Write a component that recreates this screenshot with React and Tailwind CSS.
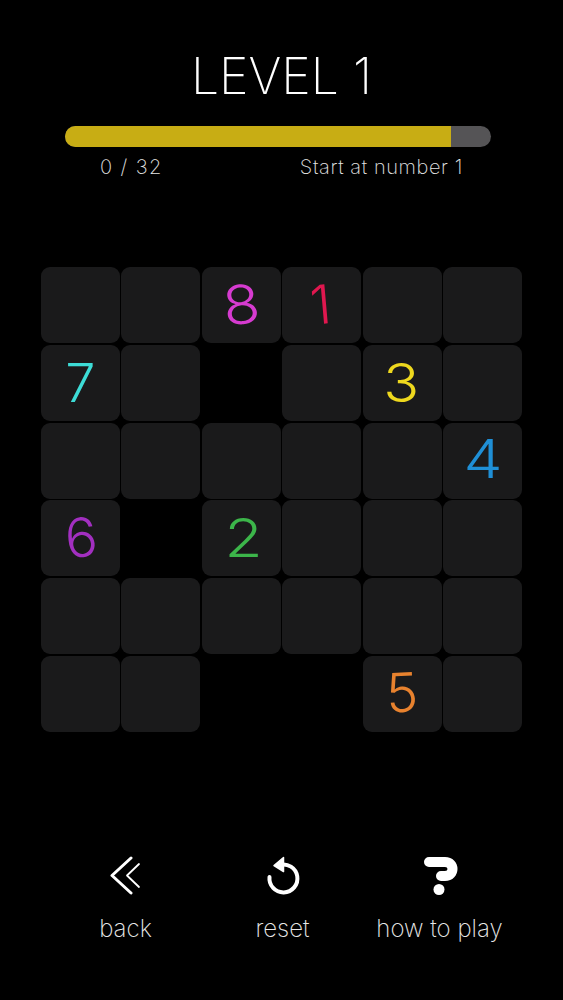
import React from 'react';

const font = { fontFamily: 'Inter, "Liberation Sans", sans-serif' };

// 6x6 board, null = hole, 0 = empty cell
const board = [
  [0, 0, 8, 1, 0, 0],
  [7, 0, null, 0, 3, 0],
  [0, 0, 0, 0, 0, 4],
  [6, null, 2, 0, 0, 0],
  [0, 0, 0, 0, 0, 0],
  [0, 0, null, null, 5, 0],
];

const digitClass = {
  1: 'text-[#e0174f] rotate-[-5deg] -translate-x-[1px]',
  2: 'text-[#3cb54a] scale-x-[1.15] translate-x-[2px]',
  3: 'text-[#eed81e] scale-x-[1.1] translate-x-[-1px]',
  4: 'text-[#1f8fd6] scale-x-[1.15] -translate-y-[2px]',
  5: 'text-[#e8822e] -rotate-3 -translate-y-[1px]',
  6: 'text-[#a22fc0] rotate-[-6deg] translate-x-[1px]',
  7: 'text-[#3ddcd6]',
  8: 'text-[#d63bd0] scale-x-[1.12] -rotate-6',
};

const BackIcon = () => (
  <svg width="36" height="40" viewBox="0 0 36 40" fill="none" stroke="white" strokeLinecap="round" strokeLinejoin="round">
    <path d="M23 2 L4 19.5 L23 37" strokeWidth="3" />
    <path d="M31 8 L19 19.5 L31 31" strokeWidth="1.8" />
  </svg>
);

const ResetIcon = () => (
  <svg width="36" height="40" viewBox="0 0 36 40" fill="none">
    <path d="M14.5 9 A14 14 0 1 1 4.5 21" stroke="white" strokeWidth="4" strokeLinecap="round" />
    <path d="M18.5 1.5 L9 9.5 L18.5 15.5 Z" fill="white" stroke="white" strokeWidth="1.5" strokeLinejoin="round" />
  </svg>
);

const HelpIcon = () => (
  <svg width="36" height="40" viewBox="0 0 36 40" fill="none">
    <path d="M7 6 H23 C33 6 33 20 23 20 H19" stroke="white" strokeWidth="10" strokeLinecap="round" strokeLinejoin="round" />
    <circle cx="17" cy="33.5" r="5.5" fill="white" />
  </svg>
);

const actions = [
  { label: 'back', icon: <BackIcon /> },
  { label: 'reset', icon: <ResetIcon /> },
  { label: 'how to play', icon: <HelpIcon /> },
];

export default function App() {
  return (
    <div className="h-[1000px] w-full bg-black overflow-hidden flex flex-col" style={font}>
      {/* Header */}
      <h1 className="mt-[47px] h-[58px] leading-[58px] text-center text-[50px] font-extralight text-white">
        LEVEL 1
      </h1>

      <div className="mt-[21px] mx-[65px] h-[21px] w-[426px] rounded-full bg-[#555456] overflow-hidden">
        <div className="h-full w-[386px] bg-[#c8ad14]"></div>
      </div>

      <div className="mt-[8px] mx-[100px] h-[24px] flex items-center justify-between text-[20px] font-extralight text-[#e4e4e4]">
        <span className="tracking-[1.4px]">0 / 32</span>
        <span className="tracking-[0.6px]">Start at number 1</span>
      </div>

      {/* Board */}
      <div className="mt-[88px] ml-[41px] w-[481px] grid grid-cols-6 gap-x-[1.5px] gap-y-[1.8px]">
        {board.flat().map((cell, i) =>
          cell === null ? (
            <div key={i} className="h-[76px]"></div>
          ) : (
            <div key={i} className="h-[76px] rounded-[9px] bg-[#1a1a1b] flex items-center justify-center">
              {cell > 0 && (
                <span className={`text-[54px] leading-none font-light ${digitClass[cell]}`}>{cell}</span>
              )}
            </div>
          )
        )}
      </div>

      {/* Bottom actions */}
      <div className="mt-[124px] ml-[47px] w-[471px] grid grid-cols-3">
        {actions.map((action) => (
          <button key={action.label} className="flex flex-col items-center text-[#e8e8e8]">
            {action.icon}
            <span className="mt-[18px] text-[24px] leading-[30px] font-extralight">{action.label}</span>
          </button>
        ))}
      </div>
    </div>
  );
}
